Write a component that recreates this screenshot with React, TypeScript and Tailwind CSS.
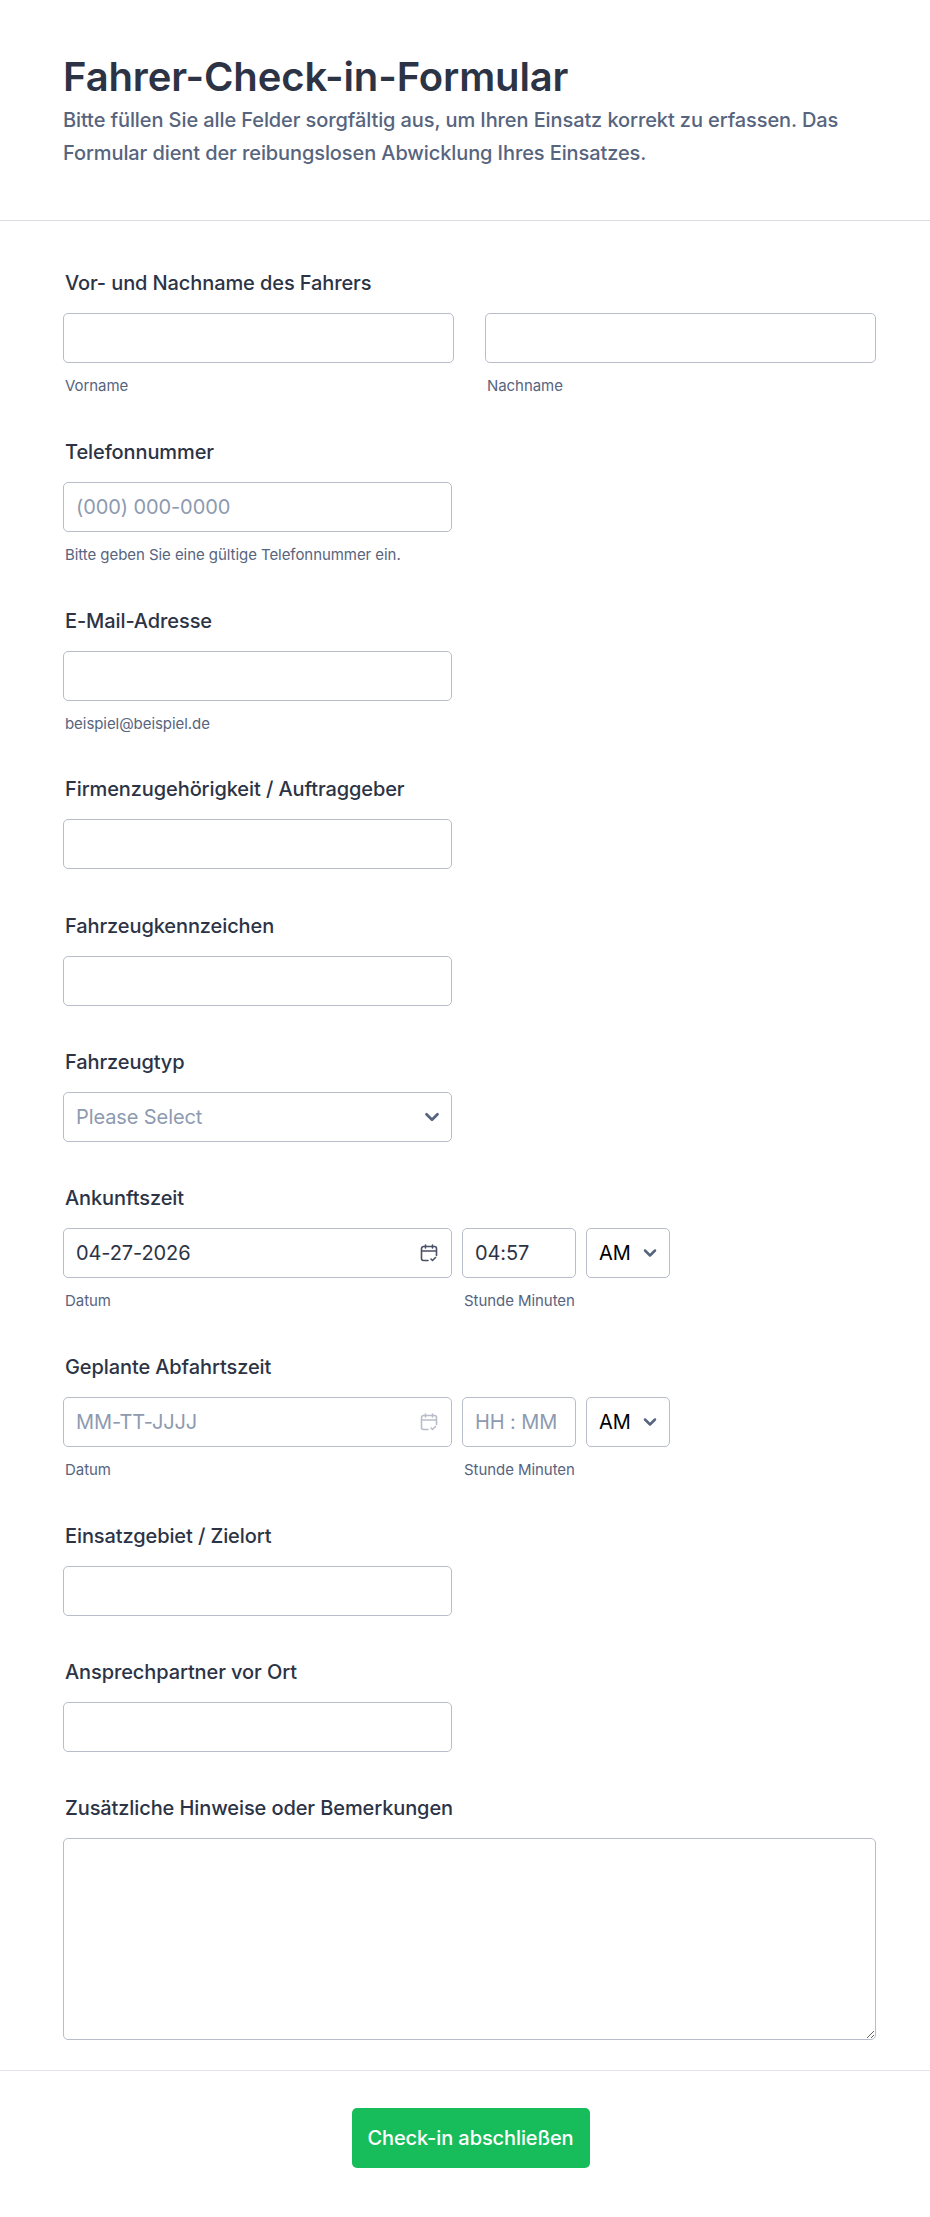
import { ChevronDown } from "lucide-react";

const inputCls =
  "block h-[50px] w-full rounded-[5px] border border-[#b8bdc9] bg-white px-[12px] text-[20px] tracking-[-0.1px] text-[#2c3345] outline-none placeholder:text-[#8d9ab0]";

function Label({ children }: { children: React.ReactNode }) {
  return <label className="mb-[20px] ml-[2px] block h-[20px] text-[20px] leading-[20px] font-medium tracking-[-0.1px] text-[#2c3345]">{children}</label>;
}

function Sub({ children, className = "" }: { children: React.ReactNode; className?: string }) {
  return <div className={`mt-[14px] ml-[2px] h-[18.500px] text-[15px] leading-[18px] tracking-[-0.06px] text-[#57647e] ${className}`}>{children}</div>;
}

function CalendarIcon({ muted = false }: { muted?: boolean }) {
  return (
    <svg
      viewBox="0 0 18 18"
      fill="none"
      strokeWidth="1.6"
      strokeLinecap="round"
      strokeLinejoin="round"
      className={`pointer-events-none absolute top-[16px] right-[14px] h-[18px] w-[18px] ${muted ? "stroke-[#b8bdc9]" : "stroke-[#4a5065]"}`}
    >
      <path d="M8 16.500H3.500a2 2 0 0 1-2-2V4.500a2 2 0 0 1 2-2h11a2 2 0 0 1 2 2v7" />
      <path d="M2 7h14M5.500 1v3M12.500 1v3" />
      <path d="M11 15l1.500 1.500 3-3" />
    </svg>
  );
}

function AmPm() {
  return (
    <div className="relative w-[84px]">
      <select defaultValue="AM" className="block h-[50px] w-full appearance-none rounded-[5px] border border-[#b8bdc9] bg-white pl-[12px] text-[20px] tracking-[-0.1px] text-black outline-none">
        <option>AM</option>
        <option>PM</option>
      </select>
      <ChevronDown size={20} strokeWidth={3} className="pointer-events-none absolute top-[15px] right-[10px] text-[#57647e]" />
    </div>
  );
}

function DateTime({ label, date, time }: { label: string; date?: string; time?: string }) {
  return (
    <div>
      <Label>{label}</Label>
      <div className="flex w-[607px] gap-[10px]">
        <div className="relative w-[389px]">
          <input className={inputCls} defaultValue={date} placeholder="MM-TT-JJJJ" />
          <CalendarIcon muted={!date} />
        </div>
        <input className={`${inputCls} !w-[114px]`} defaultValue={time} placeholder="HH : MM" />
        <AmPm />
      </div>
      <div className="flex w-[607px] gap-[10px]">
        <Sub className="w-[387px]">Datum</Sub>
        <Sub className="w-[114px] whitespace-nowrap">Stunde Minuten</Sub>
      </div>
    </div>
  );
}

function TextField({ label, sub, placeholder }: { label: string; sub?: string; placeholder?: string }) {
  return (
    <div className="w-[389px]">
      <Label>{label}</Label>
      <input className={inputCls} placeholder={placeholder} />
      {sub && <Sub>{sub}</Sub>}
    </div>
  );
}

export default function App() {
  return (
    <div className="min-h-[2217px] w-[930px] bg-white font-['Inter',sans-serif] text-[#2c3345]">
      {/* Header */}
      <header className="border-b border-[#dadee3] px-[63px] pt-[55px] pb-[50px]">
        <h1 className="text-[40px] leading-[44px] font-semibold tracking-[-0.12px] text-[#2c3345]">Fahrer-Check-in-Formular</h1>
        <p className="mt-[5px] text-[20px] leading-[33px] font-medium tracking-[-0.1px] text-[#57647e]">
          Bitte füllen Sie alle Felder sorgfältig aus, um Ihren Einsatz korrekt zu erfassen. Das Formular dient der reibungslosen Abwicklung Ihres Einsatzes.
        </p>
      </header>

      <form className="flex flex-col gap-[46.300px] px-[63px] pt-[52px]">
        <div>
          <Label>Vor- und Nachname des Fahrers</Label>
          <div className="flex w-[813px] gap-[31px]">
            <div className="w-[391px]">
              <input className={inputCls} />
              <Sub>Vorname</Sub>
            </div>
            <div className="w-[391px]">
              <input className={inputCls} />
              <Sub>Nachname</Sub>
            </div>
          </div>
        </div>

        <TextField label="Telefonnummer" placeholder="(000) 000-0000" sub="Bitte geben Sie eine gültige Telefonnummer ein." />
        <TextField label="E-Mail-Adresse" sub="beispiel@beispiel.de" />
        <TextField label="Firmenzugehörigkeit / Auftraggeber" />
        <TextField label="Fahrzeugkennzeichen" />

        <div className="w-[389px]">
          <Label>Fahrzeugtyp</Label>
          <div className="relative">
            <select defaultValue="" className={`${inputCls} appearance-none !text-[#8d9ab0]`}>
              <option value="">Please Select</option>
            </select>
            <ChevronDown size={22} strokeWidth={3} className="pointer-events-none absolute top-[14px] right-[9px] text-[#57647e]" />
          </div>
        </div>

        <DateTime label="Ankunftszeit" date="04-27-2026" time="04:57" />
        <DateTime label="Geplante Abfahrtszeit" />

        <TextField label="Einsatzgebiet / Zielort" />
        <TextField label="Ansprechpartner vor Ort" />

        <div className="w-[813px]">
          <Label>Zusätzliche Hinweise oder Bemerkungen</Label>
          <textarea className="block h-[202px] w-full rounded-[5px] border border-[#b8bdc9] bg-white px-[12px] py-[10px] text-[20px] outline-none" />
        </div>
      </form>

      {/* Footer */}
      <div className="mt-[30px] flex justify-center border-t border-[#e3e5ec] pt-[37px] pb-[49px] pl-[11px]">
        <button type="button" className="h-[60px] w-[238px] rounded-[5px] bg-[#18bd5b] text-[20px] font-medium tracking-[-0.1px] text-white">
          Check-in abschließen
        </button>
      </div>
    </div>
  );
}
